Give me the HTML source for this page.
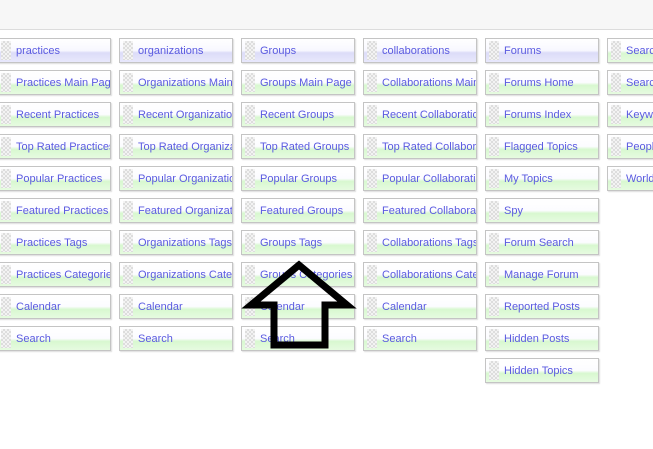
<!DOCTYPE html>
<html><head><style>
body{margin:0;width:653px;height:449px;background:#fff;position:relative;overflow:hidden;font-family:"Liberation Sans",Arial,sans-serif;}
.top{position:absolute;left:0;top:0;width:653px;height:29px;background:#f7f7f7;border-bottom:1px solid #dcdcdc;}
.b{position:absolute;width:112px;height:23px;border:1px solid #c4c4c4;box-shadow:1px 1px 1px #ddd;background:linear-gradient(#fff 0,#fcfcff 50%,#d8f8d0 62%,#e6fbe0 100%);font-size:11px;color:#5a5ae0;line-height:24px;white-space:nowrap;overflow:hidden;}
.b.p{background:linear-gradient(#fff 0,#f8f8ff 50%,#dcdcf8 60%,#e8e8fc 100%);}
.b i{position:absolute;left:3px;top:2px;width:10px;height:19px;background:repeating-conic-gradient(#ddd 0 25%,#f3f3f3 0 50%) 0 0/4px 4px;}
.b span{position:absolute;left:18px;top:0;}
svg{z-index:5}
</style></head><body>
<div class="top"></div>
<div id="c"></div>
<script>
var cols=[
["practices","Practices Main Page","Recent Practices","Top Rated Practices","Popular Practices","Featured Practices","Practices Tags","Practices Categories","Calendar","Search"],
["organizations","Organizations Main","Recent Organizations","Top Rated Organizations","Popular Organizations","Featured Organizations","Organizations Tags","Organizations Categories","Calendar","Search"],
["Groups","Groups Main Page","Recent Groups","Top Rated Groups","Popular Groups","Featured Groups","Groups Tags","Groups Categories","Calendar","Search"],
["collaborations","Collaborations Main","Recent Collaborations","Top Rated Collaborations","Popular Collaborations","Featured Collaborations","Collaborations Tags","Collaborations Categories","Calendar","Search"],
["Forums","Forums Home","Forums Index","Flagged Topics","My Topics","Spy","Forum Search","Manage Forum","Reported Posts","Hidden Posts","Hidden Topics"],
["Search","Search","Keywords","People","World"]];
var h="";
cols.forEach(function(c,ci){c.forEach(function(t,ri){
var x=-3+ci*122,y=38+ri*32;
h+='<div class="b'+((ri==0&&ci<5)?' p':'')+'" style="left:'+x+'px;top:'+y+'px"><i></i><span>'+t+'</span></div>';});});
document.getElementById('c').innerHTML=h;
</script>
<svg style="position:absolute;left:0;top:0" width="653" height="449" viewBox="0 0 653 449"><polygon points="299,265 251,305 274,305 274,345 325,345 325,305 347,305" fill="none" stroke="#000" stroke-width="7" stroke-linejoin="miter"/></svg>
</body></html>
